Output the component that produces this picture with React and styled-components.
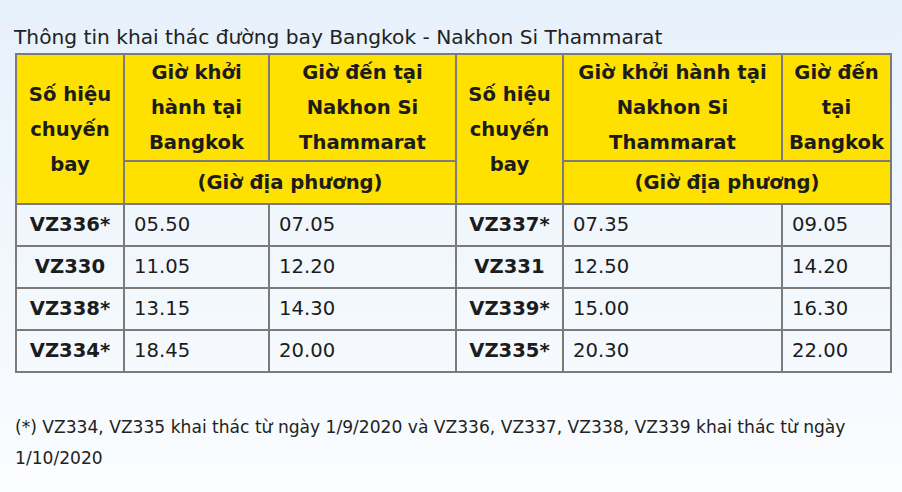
import React from 'react';
import styled, { createGlobalStyle } from 'styled-components';

const GlobalStyle = createGlobalStyle`
  html, body {
    margin: 0;
    padding: 0;
  }
  body {
    font-family: "DejaVu Sans", Verdana, sans-serif;
    color: #1c1c1c;
  }
`;

const Page = styled.div`
  width: 902px;
  height: 492px;
  box-sizing: border-box;
  padding: 22px 0 0 15px;
  background: linear-gradient(to bottom, #e7f1fb 0%, #f3f8fd 60%, #fbfdff 100%);
  overflow: hidden;
`;

const Title = styled.div`
  font-size: 20.2px;
  line-height: 31px;
  margin-left: -1px;
  color: #222;
`;

const Table = styled.table`
  border-collapse: collapse;
  width: 875px;
  table-layout: fixed;
  border: 2px solid #7b7b7b;
`;

const HeadCell = styled.th`
  background: #ffe100;
  border: 2px solid #7b7b7b;
  font-size: 19.6px;
  font-weight: bold;
  line-height: 35px;
  text-align: center;
  vertical-align: middle;
  padding: 0;
  height: ${p => p.$h || 'auto'};
`;

const DataCell = styled.td`
  border: 2px solid #7b7b7b;
  font-size: 19.6px;
  line-height: 24px;
  height: 40px;
  padding: 0 0 0 ${p => (p.$code ? '0' : '9px')};
  text-align: ${p => (p.$code ? 'center' : 'left')};
  font-weight: ${p => (p.$code ? 'bold' : 'normal')};
  vertical-align: middle;
  color: #1c1c1c;
`;

const Note = styled.div`
  font-size: 17.1px;
  line-height: 31px;
  margin-top: 39px;
  color: #222;
`;

const rows = [
  ['VZ336*', '05.50', '07.05', 'VZ337*', '07.35', '09.05'],
  ['VZ330', '11.05', '12.20', 'VZ331', '12.50', '14.20'],
  ['VZ338*', '13.15', '14.30', 'VZ339*', '15.00', '16.30'],
  ['VZ334*', '18.45', '20.00', 'VZ335*', '20.30', '22.00'],
];

export default function App() {
  return (
    <Page>
      <GlobalStyle />
      <Title>Thông tin khai thác đường bay Bangkok - Nakhon Si Thammarat</Title>
      <Table>
        <colgroup>
          <col style={{ width: 108 }} />
          <col style={{ width: 145 }} />
          <col style={{ width: 187 }} />
          <col style={{ width: 107 }} />
          <col style={{ width: 219 }} />
          <col style={{ width: 109 }} />
        </colgroup>
        <thead>
          <tr>
            <HeadCell rowSpan={2}>Số hiệu<br />chuyến<br />bay</HeadCell>
            <HeadCell $h="105px">Giờ khởi<br />hành tại<br />Bangkok</HeadCell>
            <HeadCell>Giờ đến tại<br />Nakhon Si<br />Thammarat</HeadCell>
            <HeadCell rowSpan={2}>Số hiệu<br />chuyến<br />bay</HeadCell>
            <HeadCell>Giờ khởi hành tại<br />Nakhon Si<br />Thammarat</HeadCell>
            <HeadCell>Giờ đến<br />tại<br />Bangkok</HeadCell>
          </tr>
          <tr>
            <HeadCell colSpan={2} $h="41px">(Giờ địa phương)</HeadCell>
            <HeadCell colSpan={2} $h="41px">(Giờ địa phương)</HeadCell>
          </tr>
        </thead>
        <tbody>
          {rows.map(r => (
            <tr key={r[0]}>
              <DataCell $code>{r[0]}</DataCell>
              <DataCell>{r[1]}</DataCell>
              <DataCell>{r[2]}</DataCell>
              <DataCell $code>{r[3]}</DataCell>
              <DataCell>{r[4]}</DataCell>
              <DataCell>{r[5]}</DataCell>
            </tr>
          ))}
        </tbody>
      </Table>
      <Note>
        (*) VZ334, VZ335 khai thác từ ngày 1/9/2020 và VZ336, VZ337, VZ338, VZ339 khai thác từ ngày<br />
        1/10/2020
      </Note>
    </Page>
  );
}
